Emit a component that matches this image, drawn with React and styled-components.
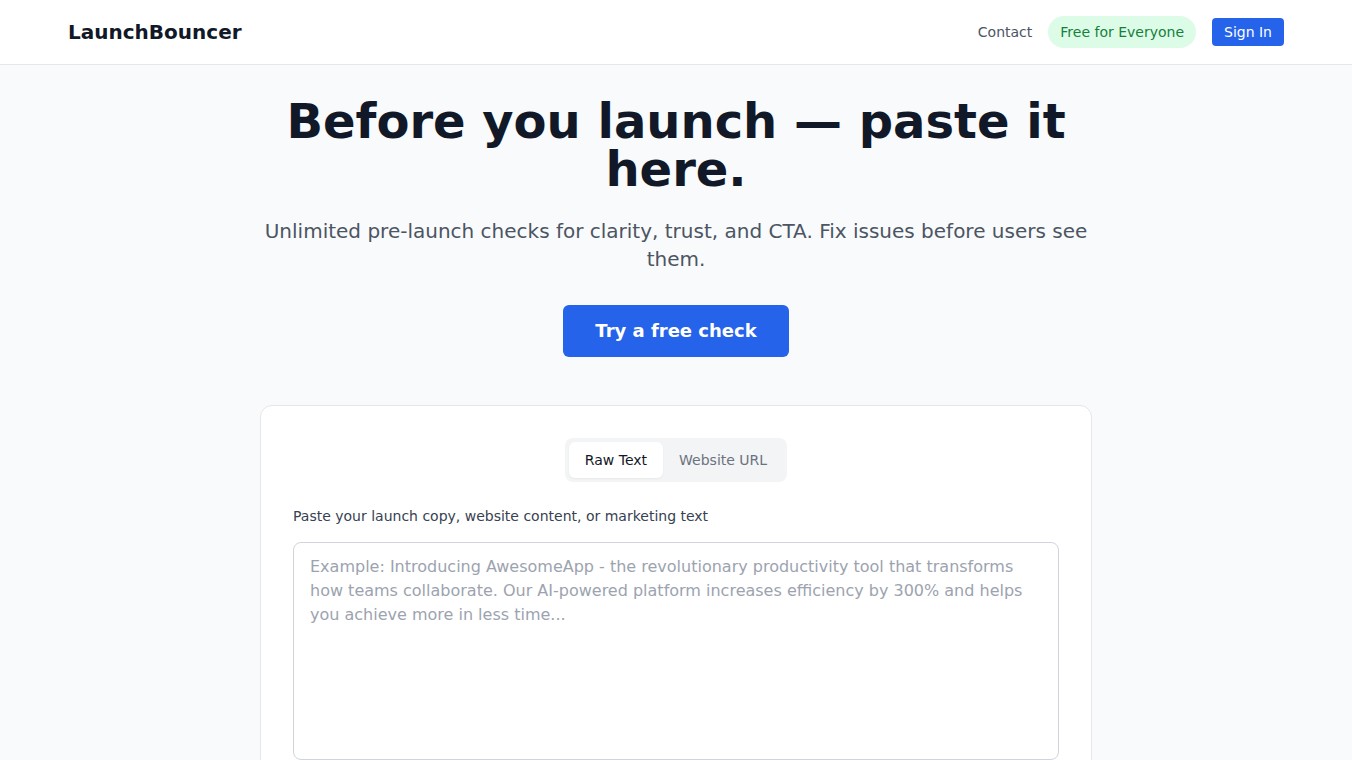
import React, { useState } from "react";
import styled, { createGlobalStyle } from "styled-components";

const GlobalStyle = createGlobalStyle`
  * {
    box-sizing: border-box;
  }
  body {
    margin: 0;
    background: #f9fafb;
    font-family: "DejaVu Sans", "Noto Sans", sans-serif;
    color: #111827;
  }
`;

// Header

const Header = styled.header`
  background: #ffffff;
  border-bottom: 1px solid #e5e7eb;
`;

const HeaderInner = styled.div`
  max-width: 1280px;
  margin: 0 auto;
  padding: 0 32px;
  height: 64px;
  display: flex;
  align-items: center;
  justify-content: space-between;
`;

const Logo = styled.div`
  font-size: 20px;
  line-height: 28px;
  font-weight: 700;
  color: #111827;
`;

const Nav = styled.nav`
  display: flex;
  align-items: center;
  gap: 16px;
`;

const NavLink = styled.a`
  font-size: 14px;
  line-height: 20px;
  color: #4b5563;
  text-decoration: none;
  cursor: pointer;
`;

const Badge = styled.span`
  font-size: 14px;
  line-height: 20px;
  padding: 6px 12px;
  border-radius: 9999px;
  background: #dcfce7;
  color: #15803d;
`;

const SignInButton = styled.button`
  font-family: inherit;
  font-size: 14px;
  line-height: 20px;
  padding: 4px 12px;
  border: none;
  border-radius: 4px;
  background: #2563eb;
  color: #ffffff;
  cursor: pointer;
`;

// Hero

const Main = styled.main`
  max-width: 896px;
  margin: 0 auto;
  padding: 32px 32px 48px;
  text-align: center;
`;

const Title = styled.h1`
  margin: 0 0 24px;
  font-size: 48px;
  line-height: 48px;
  font-weight: 700;
  color: #111827;
`;

const Subtitle = styled.p`
  margin: 0 0 32px;
  font-size: 20px;
  line-height: 28px;
  color: #4b5563;
`;

const CtaButton = styled.button`
  font-family: inherit;
  font-size: 18px;
  line-height: 28px;
  font-weight: 700;
  padding: 12px 32px;
  border: none;
  border-radius: 6px;
  background: #2563eb;
  color: #ffffff;
  cursor: pointer;
`;

// Checker card

const Card = styled.section`
  margin-top: 48px;
  background: #ffffff;
  border: 1px solid #e5e7eb;
  border-radius: 12px;
  padding: 32px;
  text-align: left;
`;

const TabsRow = styled.div`
  display: flex;
  justify-content: center;
  margin-bottom: 24px;
`;

const Tabs = styled.div`
  display: inline-flex;
  padding: 4px;
  background: #f3f4f6;
  border-radius: 8px;
`;

const Tab = styled.button`
  font-family: inherit;
  font-size: 14px;
  line-height: 20px;
  padding: 8px 16px;
  border: none;
  border-radius: 6px;
  cursor: pointer;
  background: ${(p) => (p.$active ? "#ffffff" : "transparent")};
  color: ${(p) => (p.$active ? "#111827" : "#6b7280")};
  box-shadow: ${(p) => (p.$active ? "0 1px 2px rgba(0,0,0,0.05)" : "none")};
`;

const Label = styled.label`
  display: block;
  font-size: 14px;
  line-height: 20px;
  color: #374151;
  margin-bottom: 16px;
`;

const TextArea = styled.textarea`
  display: block;
  width: 100%;
  font-family: inherit;
  font-size: 16px;
  line-height: 24px;
  padding: 12px 16px;
  border: 1px solid #d1d5db;
  border-radius: 8px;
  resize: none;
  color: #111827;
  outline: none;

  &::placeholder {
    color: #9ca3af;
  }
`;

export default function App() {
  const [mode, setMode] = useState("text");
  const [value, setValue] = useState("");

  return (
    <>
      <GlobalStyle />
      <Header>
        <HeaderInner>
          <Logo>LaunchBouncer</Logo>
          <Nav>
            <NavLink>Contact</NavLink>
            <Badge>Free for Everyone</Badge>
            <SignInButton>Sign In</SignInButton>
          </Nav>
        </HeaderInner>
      </Header>

      <Main>
        <Title>Before you launch — paste it here.</Title>
        <Subtitle>
          Unlimited pre-launch checks for clarity, trust, and CTA. Fix issues
          before users see them.
        </Subtitle>
        <CtaButton>Try a free check</CtaButton>

        <Card>
          <TabsRow>
            <Tabs>
              <Tab $active={mode === "text"} onClick={() => setMode("text")}>
                Raw Text
              </Tab>
              <Tab $active={mode === "url"} onClick={() => setMode("url")}>
                Website URL
              </Tab>
            </Tabs>
          </TabsRow>
          <Label htmlFor="copy">
            Paste your launch copy, website content, or marketing text
          </Label>
          <TextArea
            id="copy"
            rows={8}
            value={value}
            onChange={(e) => setValue(e.target.value)}
            placeholder="Example: Introducing AwesomeApp - the revolutionary productivity tool that transforms how teams collaborate. Our AI-powered platform increases efficiency by 300% and helps you achieve more in less time..."
          />
        </Card>
      </Main>
    </>
  );
}
